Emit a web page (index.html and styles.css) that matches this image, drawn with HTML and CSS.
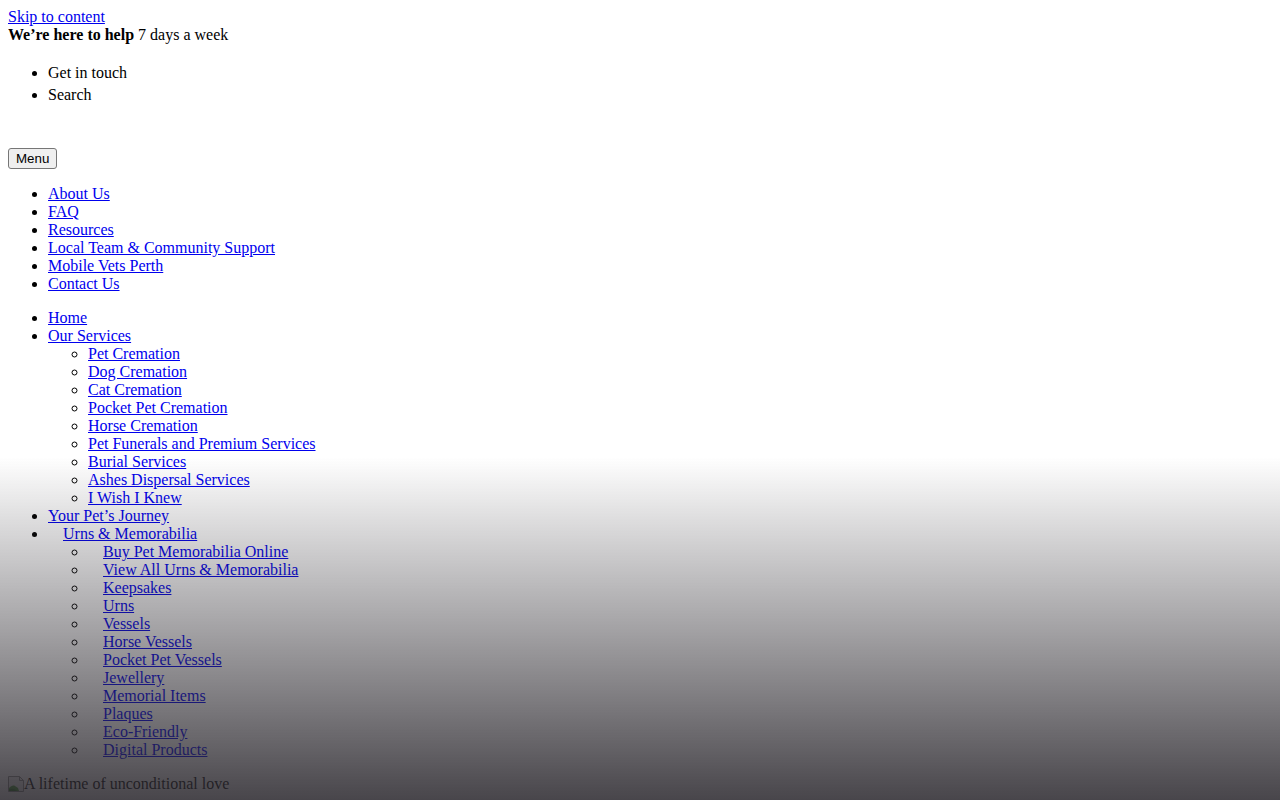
FILE: index.html
```html
<!DOCTYPE html>
<html lang="en">
<head>
<meta charset="UTF-8">
<meta name="viewport" content="width=device-width, initial-scale=1.0">
<title>Pet Cremation Perth</title>
<link rel="stylesheet" href="styles.css">
</head>
<body>
<a class="skip-link" href="#content">Skip to content</a>
<div class="top-bar">
    <strong>We’re here to help</strong> 7 days a week
</div>
<ul class="top-links">
    <li>Get in touch</li>
    <li>Search</li>
</ul>
<div class="brand"></div>
<button class="menu-toggle" type="button">Menu</button>

<ul class="secondary-nav">
    <li><a href="#">About Us</a></li>
    <li><a href="#">FAQ</a></li>
    <li><a href="#">Resources</a></li>
    <li><a href="#">Local Team &amp; Community Support</a></li>
    <li><a href="#">Mobile Vets Perth</a></li>
    <li><a href="#">Contact Us</a></li>
</ul>

<ul class="main-nav">
    <li><a href="#">Home</a></li>
    <li><a href="#">Our Services</a>
        <ul>
            <li><a href="#">Pet Cremation</a></li>
            <li><a href="#">Dog Cremation</a></li>
            <li><a href="#">Cat Cremation</a></li>
            <li><a href="#">Pocket Pet Cremation</a></li>
            <li><a href="#">Horse Cremation</a></li>
            <li><a href="#">Pet Funerals and Premium Services</a></li>
            <li><a href="#">Burial Services</a></li>
            <li><a href="#">Ashes Dispersal Services</a></li>
            <li><a href="#">I Wish I Knew</a></li>
        </ul>
    </li>
    <li><a href="#">Your Pet’s Journey</a></li>
    <li><span class="menu-icon"></span><a href="#">Urns &amp; Memorabilia</a>
        <ul>
            <li><span class="menu-icon"></span><a href="#">Buy Pet Memorabilia Online</a></li>
            <li><span class="menu-icon"></span><a href="#">View All Urns &amp; Memorabilia</a></li>
            <li><span class="menu-icon"></span><a href="#">Keepsakes</a></li>
            <li><span class="menu-icon"></span><a href="#">Urns</a></li>
            <li><span class="menu-icon"></span><a href="#">Vessels</a></li>
            <li><span class="menu-icon"></span><a href="#">Horse Vessels</a></li>
            <li><span class="menu-icon"></span><a href="#">Pocket Pet Vessels</a></li>
            <li><span class="menu-icon"></span><a href="#">Jewellery</a></li>
            <li><span class="menu-icon"></span><a href="#">Memorial Items</a></li>
            <li><span class="menu-icon"></span><a href="#">Plaques</a></li>
            <li><span class="menu-icon"></span><a href="#">Eco-Friendly</a></li>
            <li><span class="menu-icon"></span><a href="#">Digital Products</a></li>
        </ul>
    </li>
</ul>

<main id="content" class="page-body">
    <div class="hero">
        <span class="hero-image"><svg class="broken-img" width="16" height="16" viewBox="0 0 16 16" aria-hidden="true">
            <path d="M0.5 0.5h11l4 4v11h-15z" fill="#ececec" stroke="#8f8f8f"/>
            <path d="M11.5 0.5v4h4" fill="none" stroke="#8f8f8f"/>
            <path d="M1 15v-3c2-2 4-3 6-2l3 2 1 3z" fill="#4a9a3a"/>
            <path d="M1 15v-1.5c2-1 4-1 6 0l2 1.5z" fill="#2f7a26"/>
        </svg>A lifetime of unconditional love</span>
    </div>
</main>

<div class="hero-shade"></div>
</body>
</html>
```

FILE: styles.css
```css
html::-webkit-scrollbar {
    width: 15px;
    background: #f1f0f2;
}

html::-webkit-scrollbar-thumb {
    background: #b9b8bb;
    border: 2px solid #f1f0f2;
    border-top: 0;
    border-bottom: 0;
}

body {
    margin: 8px;
    font-family: "Liberation Serif", "Times New Roman", serif;
    font-size: 16px;
    color: #000;
}

a {
    color: #0000ee;
}

.top-links {
    margin: 18px 0 16px;
    padding-left: 40px;
}

.top-links li {
    line-height: 22px;
}

/* logo slot, image not loaded */
.brand {
    height: 26px;
}

.menu-toggle {
    font: 13.33px "Liberation Sans", Arial, sans-serif;
    padding: 1px 7px;
    border: 1px solid #767676;
    border-radius: 3px;
    background: #efefef;
    color: #000;
    height: 21px;
}

.secondary-nav,
.main-nav {
    margin: 16px 0;
    padding-left: 40px;
}

.main-nav ul {
    padding-left: 40px;
    list-style: circle;
}

.menu-icon {
    display: inline-block;
    width: 15px;
}

.page-body {
    min-height: 4000px;
}

.hero-image {
    display: inline-flex;
    align-items: flex-end;
}

.broken-img {
    margin-bottom: 1px;
}

/* dark fade over the lower half of the viewport */
.hero-shade {
    position: fixed;
    left: 0;
    right: 0;
    top: 0;
    bottom: 0;
    pointer-events: none;
    background: linear-gradient(to bottom,
        rgba(42, 39, 45, 0) 457px,
        rgba(42, 39, 45, 0.86) 800px);
}
```
